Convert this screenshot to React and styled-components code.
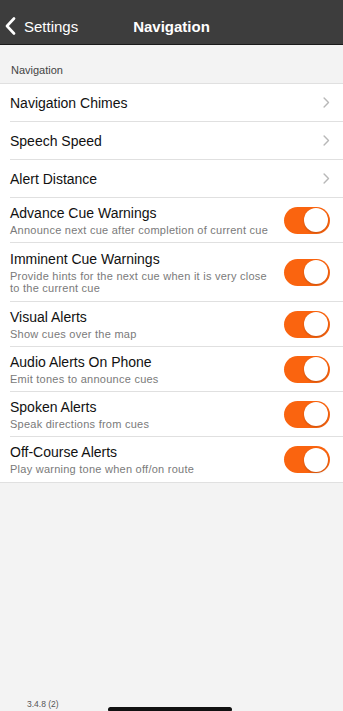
import styled, { createGlobalStyle } from "styled-components"

// Styles globaux de la page
const GlobalStyle = createGlobalStyle`
    html, body {
        margin: 0;
        padding: 0;
        background-color: #f3f3f3;
        font-family: "Liberation Sans", Arial, sans-serif;
        -webkit-font-smoothing: antialiased;
    }
`

const Page = styled.div`
    min-height: 711px;
    display: flex;
    flex-direction: column;
    background-color: #f3f3f3;
`
const Header = styled.div`
    height: 45px;
    padding-top: 8px;
    box-sizing: border-box;
    background-color: #3d3d3d;
    border-bottom: 1px solid #1a1a1a;
    display: flex;
    align-items: center;
    position: relative;
    color: #ffffff;
`
const BackButton = styled.div`
    display: flex;
    align-items: center;
    gap: 8px;
    padding-left: 5px;
    font-size: 15px;
`
const HeaderTitle = styled.div`
    position: absolute;
    left: 0;
    right: 0;
    top: 8px;
    bottom: 0;
    display: flex;
    align-items: center;
    justify-content: center;
    font-size: 15px;
    font-weight: 700;
    pointer-events: none;
`
const SectionLabel = styled.div`
    padding: 19px 11px 7px;
    font-size: 11px;
    color: #444444;
`
const List = styled.div`
    background-color: #ffffff;
    border-top: 1px solid #e0e0e0;
    border-bottom: 1px solid #e0e0e0;
`
const Row = styled.div`
    display: flex;
    align-items: center;
    justify-content: space-between;
    margin-left: 10px;
    padding-right: 13px;
    min-height: ${(props) => (props.$tall ? "59px" : props.$sub ? "45px" : "38px")};
    border-bottom: ${(props) => (props.$last ? "none" : "1px solid #e0e0e0")};
    box-sizing: border-box;
`
const RowText = styled.div`
    display: flex;
    flex-direction: column;
    gap: 3px;
    padding: 2px 0;
    max-width: 262px;
`
const RowTitle = styled.div`
    font-size: 14px;
    color: #111111;
`
const RowSub = styled.div`
    font-size: 11px;
    color: #7a7a7a;
    line-height: 12px;
    letter-spacing: 0.25px;
`
const Switch = styled.div`
    width: 46px;
    height: 27px;
    border-radius: 14px;
    background-color: #fa640f;
    display: flex;
    align-items: center;
    justify-content: flex-end;
    padding: 0 2px;
    box-sizing: border-box;
    flex-shrink: 0;
`
const Knob = styled.div`
    width: 24px;
    height: 24px;
    border-radius: 50%;
    background-color: #ffffff;
    box-shadow: 0 1px 2px rgba(0, 0, 0, 0.2);
`
const Footer = styled.div`
    margin-top: auto;
    display: flex;
    align-items: flex-end;
    height: 20px;
    position: relative;
`
const Version = styled.div`
    font-size: 8.5px;
    color: #555555;
    padding-left: 27px;
    padding-bottom: 2px;
`
const HomeBar = styled.div`
    position: absolute;
    left: 108px;
    bottom: -1px;
    width: 124px;
    height: 5px;
    border-radius: 3px;
    background-color: #111111;
`

const links = ["Navigation Chimes", "Speech Speed", "Alert Distance"]

const toggles = [
    { title: "Advance Cue Warnings", sub: "Announce next cue after completion of current cue" },
    { title: "Imminent Cue Warnings", sub: "Provide hints for the next cue when it is very close to the current cue", tall: true },
    { title: "Visual Alerts", sub: "Show cues over the map" },
    { title: "Audio Alerts On Phone", sub: "Emit tones to announce cues" },
    { title: "Spoken Alerts", sub: "Speak directions from cues" },
    { title: "Off-Course Alerts", sub: "Play warning tone when off/on route" },
]

function Chevron({ color, size, width }) {
    return (
        <svg width={size * 0.6} height={size} viewBox="0 0 6 10" fill="none">
            <path d="M1 1l4 4-4 4" stroke={color} strokeWidth={width} strokeLinecap="round" strokeLinejoin="round" />
        </svg>
    )
}

function App() {
    return (
        <Page>
            <GlobalStyle />
            <Header>
                <BackButton>
                    <svg width="11" height="18" viewBox="0 0 11 18" fill="none">
                        <path d="M9 1.5L2 9l7 7.5" stroke="#ffffff" strokeWidth="2.6" strokeLinecap="round" strokeLinejoin="round" />
                    </svg>
                    Settings
                </BackButton>
                <HeaderTitle>Navigation</HeaderTitle>
            </Header>
            <SectionLabel>Navigation</SectionLabel>
            <List>
                {links.map((label) => (
                    <Row key={label}>
                        <RowTitle>{label}</RowTitle>
                        <Chevron color="#b8b8b8" size={11} width={1.3} />
                    </Row>
                ))}
                {toggles.map((item, i) => (
                    <Row key={item.title} $sub $tall={item.tall} $last={i === toggles.length - 1}>
                        <RowText>
                            <RowTitle>{item.title}</RowTitle>
                            <RowSub>{item.sub}</RowSub>
                        </RowText>
                        <Switch>
                            <Knob />
                        </Switch>
                    </Row>
                ))}
            </List>
            <Footer>
                <Version>3.4.8 (2)</Version>
                <HomeBar />
            </Footer>
        </Page>
    )
}

export default App
